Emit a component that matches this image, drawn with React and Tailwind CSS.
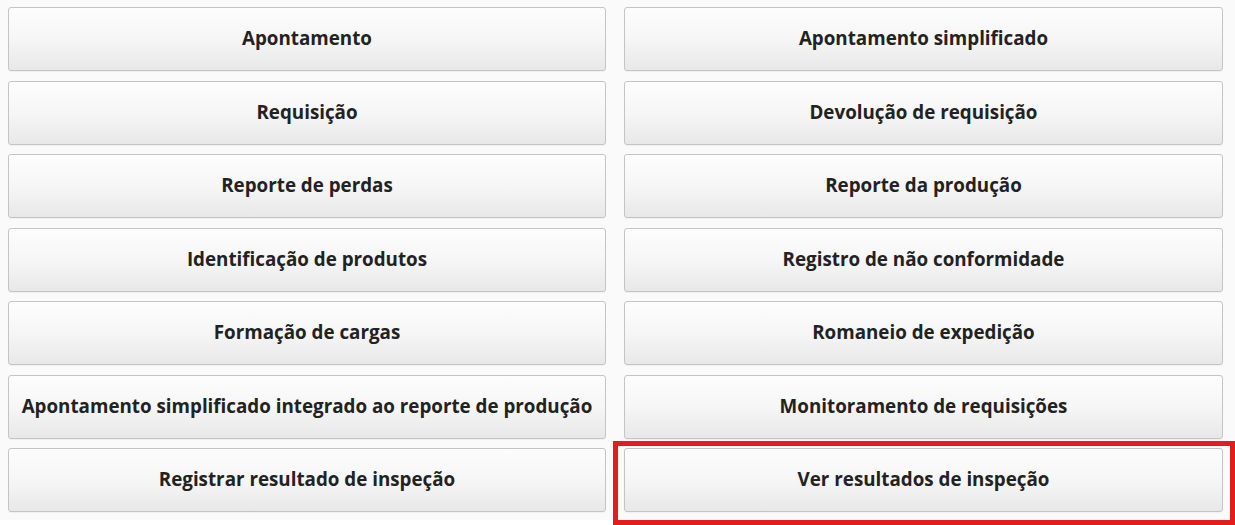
const items = [
  'Apontamento',
  'Apontamento simplificado',
  'Requisição',
  'Devolução de requisição',
  'Reporte de perdas',
  'Reporte da produção',
  'Identificação de produtos',
  'Registro de não conformidade',
  'Formação de cargas',
  'Romaneio de expedição',
  'Apontamento simplificado integrado ao reporte de produção',
  'Monitoramento de requisições',
  'Registrar resultado de inspeção',
  'Ver resultados de inspeção',
]

function MenuButton({ label }) {
  return (
    <button
      type="button"
      className="flex h-[64px] w-full items-center justify-center rounded-[3px] border border-[#c4c4c4] bg-gradient-to-b from-[#fdfdfd] via-[#f6f6f6] to-[#e8e8e8] pb-[1px] text-[18.8px] font-bold text-[#222] shadow-[0_1px_0_rgba(0,0,0,0.04)]"
    >
      {label}
    </button>
  )
}

export default function App() {
  return (
    <div
      className="relative h-[525px] w-[1235px] bg-white"
      style={{ fontFamily: '"Open Sans", "Noto Sans", sans-serif' }}
    >
      <div className="grid grid-cols-[598px_599px] gap-x-[18px] gap-y-[9.5px] bg-[#fafafa] pb-[8px] pl-[8px] pt-[7px]">
        {items.map((label) => (
          <MenuButton key={label} label={label} />
        ))}
      </div>
      <div className="pointer-events-none absolute left-[613px] top-[441px] h-[84px] w-[622px] border-[5px] border-[#e31c1c]" />
    </div>
  )
}
